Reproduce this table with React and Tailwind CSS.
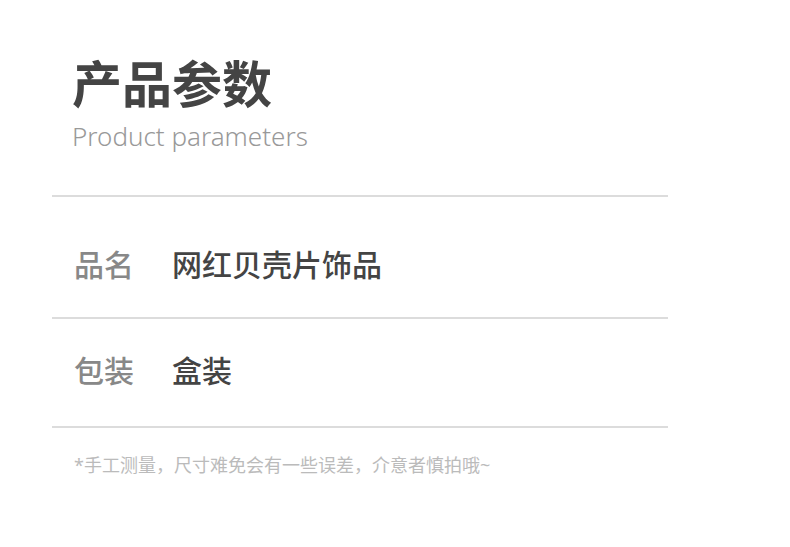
export default function App() {
  const rows = [
    { label: "品名", value: "网红贝壳片饰品", h: "h-[120px] pt-[53px]" },
    { label: "包装", value: "盒装", h: "h-[107px] pt-[37px]" },
  ];

  return (
    <div
      className="w-[790px] h-[547px] bg-white overflow-hidden"
      style={{ fontFamily: '"Noto Sans", "Noto Sans CJK SC", sans-serif' }}
    >
      <div className="pl-[52px] w-[668px]">
        <div className="pl-[20px] pt-[52px]">
          <h1 className="text-[50px] leading-[64px] font-bold text-[#444]">产品参数</h1>
          <p className="text-[26px] leading-[30px] font-light text-[#999] mt-[5px]">
            Product parameters
          </p>
        </div>

        <div className="mt-[44px] h-[2px] bg-[#dcdcdc]" />

        {rows.map((row) => (
          <div key={row.label}>
            <div className={`${row.h} flex items-start pl-[22px]`}>
              <span className="w-[98px] text-[30px] leading-[30px] font-medium text-[#888]">
                {row.label}
              </span>
              <span className="text-[30px] leading-[30px] font-medium text-[#444]">{row.value}</span>
            </div>
            <div className="h-[2px] bg-[#dcdcdc]" />
          </div>
        ))}

        <p className="mt-[24px] pl-[22px] text-[18px] leading-[27px] text-[#bbb]">
          *手工测量，尺寸难免会有一些误差，介意者慎拍哦~
        </p>
      </div>
    </div>
  );
}
